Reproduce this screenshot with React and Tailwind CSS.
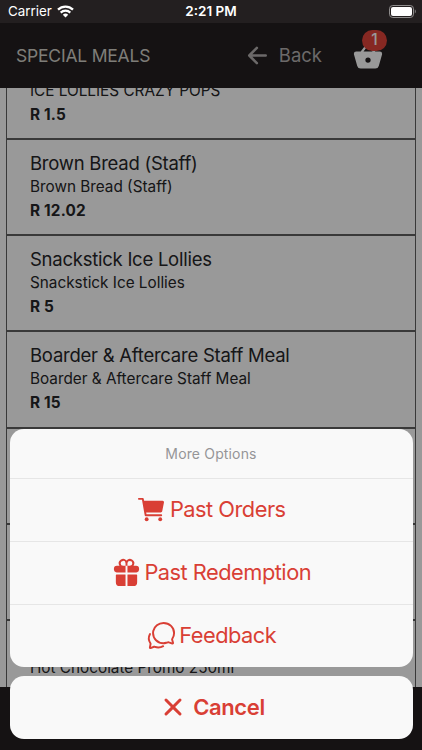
import {
  IoArrowBack,
  IoBasket,
  IoCart,
  IoChatbubblesOutline,
  IoClose,
  IoGift,
} from 'react-icons/io5';

const meals = [
  { name: 'ICE LOLLIES CRAZY POPS', price: 'R 1.5' },
  { name: 'Brown Bread (Staff)', price: 'R 12.02' },
  { name: 'Snackstick Ice Lollies', price: 'R 5' },
  { name: 'Boarder & Aftercare Staff Meal', price: 'R 15' },
  // placeholders, hidden behind the action sheet
  { name: '', price: '' },
  { name: '', price: '' },
];

const options = [
  { label: 'Past Orders', icon: IoCart },
  { label: 'Past Redemption', icon: IoGift },
  { label: 'Feedback', icon: IoChatbubblesOutline },
];

function StatusBar() {
  return (
    <div className="flex h-[23px] shrink-0 items-center bg-[#231f20] text-white">
      <div className="flex w-1/3 items-center gap-[5px] pl-2">
        <span className="text-[13.4px] leading-none">Carrier</span>
        <svg className="h-[13px] w-[17px]" viewBox="0 0 17 13" fill="none">
          <path d="M1 4.7a10.8 10.8 0 0 1 15 0" stroke="#fff" strokeWidth="2.3" />
          <path d="M3.7 7.6a6.9 6.9 0 0 1 9.6 0" stroke="#fff" strokeWidth="2.2" />
          <path d="M5.8 9.8a3.9 3.9 0 0 1 5.4 0l-2.7 2.8z" fill="#fff" />
        </svg>
      </div>
      <p className="w-1/3 pt-px text-center text-[13.5px] font-semibold leading-none">
        2:21 PM
      </p>
      <div className="flex w-1/3 justify-end pr-[6px]">
        <svg className="h-[13px] w-[27px]" viewBox="0 0 27 13" fill="none">
          <rect x="0.5" y="0.5" width="24" height="12" rx="3.3" stroke="#8f8d8d" />
          <rect x="2" y="2" width="21" height="9" rx="2" fill="#fff" />
          <path d="M25.8 4.6v3.8c1.3-.6 1.3-3.2 0-3.8z" fill="#8f8d8d" />
        </svg>
      </div>
    </div>
  );
}

function Header() {
  return (
    <div className="flex h-[65px] shrink-0 items-center bg-[#231f20] pl-4 pr-[36px]">
      <p className="grow pt-px text-[17.5px] tracking-[-0.2px] text-[#d3d1c9]">
        SPECIAL MEALS
      </p>
      <div className="flex items-center gap-2 text-[#b4b0b0]">
        <IoArrowBack size={27} />
        <span className="text-[18.5px]">Back</span>
      </div>
      <div className="relative ml-[28px] text-white">
        <IoBasket size={36} />
        <span className="absolute -top-[8px] left-[12px] flex h-[21px] w-[25px] items-center justify-center rounded-full bg-[#df4339] text-[15.5px] font-medium leading-none">
          1
        </span>
      </div>
    </div>
  );
}

function MealCard({ meal }) {
  return (
    <div className="h-[96.15px] shrink-0 border border-[#606060] px-[23px] pt-[10px] text-[#262628]">
      <p className="text-[18.5px] leading-[26px] tracking-[-0.25px]">{meal.name}</p>
      <p className="text-[15.3px] leading-[22px]">{meal.name}</p>
      <p className="text-[15.3px] font-bold leading-[25px] tracking-[0.2px]">
        {meal.price}
      </p>
    </div>
  );
}

function ActionSheet() {
  return (
    <div className="absolute inset-x-0 bottom-[11.5px] px-[9.5px] text-[#d93f35]">
      <div className="overflow-hidden rounded-[14px] bg-[#f9f9f9]">
        <div className="flex h-[48.5px] items-center justify-center pt-px text-[14px] tracking-[0.15px] text-[#959597]">
          More Options
        </div>
        {options.map(({ label, icon: Icon }) => (
          <div
            key={label}
            className="flex h-[63px] items-center justify-center gap-[2.5px] border-t border-[#e6e6e6] text-[21.8px] tracking-[-0.5px]"
          >
            <Icon size={31} />
            <span>{label}</span>
          </div>
        ))}
      </div>
      <div className="mt-[9px] flex h-[63px] items-center justify-center gap-1 rounded-[14px] bg-[#f9f9f9] text-[22px] font-semibold tracking-[-0.4px]">
        <IoClose size={32} />
        <span>Cancel</span>
      </div>
    </div>
  );
}

export default function App() {
  return (
    <div className="relative flex h-[750px] w-[422px] flex-col overflow-hidden bg-white font-['Inter','Liberation_Sans',sans-serif]">
      <StatusBar />
      <Header />
      <div className="h-[599px] shrink-0 overflow-hidden px-[6px]">
        <div className="-mt-[45px] flex flex-col">
          {meals.map((meal, index) => (
            <MealCard key={index} meal={meal} />
          ))}
          <div className="h-[96px] shrink-0 border border-[#606060] px-[23px] pt-[36px] text-[15.3px] leading-[22px] text-[#262628]">
            Hot Chocolate Promo 250ml
          </div>
        </div>
      </div>
      <div className="grow bg-[#231f20]" />

      {/* backdrop leaves the status bar undimmed */}
      <div className="absolute inset-x-0 bottom-0 top-[23px] bg-black/40" />
      <ActionSheet />
    </div>
  );
}
